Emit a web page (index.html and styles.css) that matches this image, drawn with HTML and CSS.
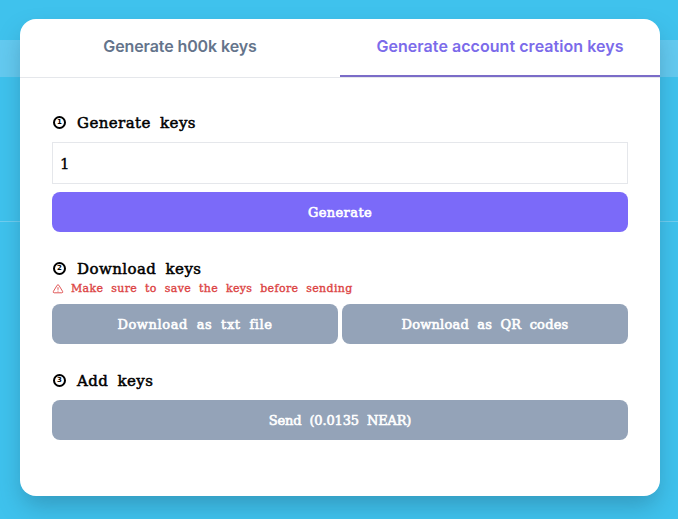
FILE: index.html
```
<!DOCTYPE html>
<html lang="en">
<head>
<meta charset="utf-8">
<title>Generate keys</title>
<link rel="stylesheet" href="styles.css">
</head>
<body>
<main class="card">
  <nav class="tabs">
    <a class="tab tab-hook">Generate h00k keys</a>
    <a class="tab tab-account active">Generate account creation keys</a>
  </nav>
  <div class="content">
    <section class="step">
      <h2 class="title"><span class="number">1</span><span>Generate keys</span></h2>
      <input class="amount" type="text" value="1">
      <button class="btn primary"><span class="b-generate">Generate</span></button>
    </section>
    <section class="step step-download">
      <h2 class="title"><span class="number">2</span><span>Download keys</span></h2>
      <p class="warning">
        <svg class="warning-icon" viewBox="0 0 12 12"><path d="M5.1 2.3Q6 1 6.9 2.3L10.6 8.4Q11.1 9.8 9.8 9.8H2.2Q.9 9.8 1.4 8.4Z"/><path d="M6 4.2V6.8M6 7.7V8.6"/></svg>
        <span>Make sure to save the keys before sending</span>
      </p>
      <div class="buttons">
        <button class="btn"><span class="b-txt">Download as txt file</span></button>
        <button class="btn"><span class="b-qr">Download as QR codes</span></button>
      </div>
    </section>
    <section class="step step-add">
      <h2 class="title"><span class="number">3</span><span>Add keys</span></h2>
      <button class="btn"><span class="b-send">Send (0.0135 NEAR)</span></button>
    </section>
  </div>
</main>
</body>
</html>
```
FILE: styles.css
```
* { box-sizing: border-box; }
body {
  margin: 0;
  height: 519px;
  padding: 19px 18px 23px 20px;
  overflow: hidden;
  background: linear-gradient(#3fc2ed 40px, #64caf0 40px, #64caf0 77px, #3fc2ed 77px, #3fc2ed 221px, #70cef0 221px, #70cef0 222px, #3fc2ed 222px);
  font-family: "DejaVu Serif", serif;
  color: #000;
}
.card {
  height: 477px;
  border-radius: 16px;
  background: #fff;
  box-shadow: 0 12px 24px -3px rgba(30, 80, 105, .36);
}
.tabs { display: flex; height: 59px; border-bottom: 1px solid #e5e7eb; }
.tab {
  flex: 1;
  height: 58px;
  text-align: center;
  white-space: nowrap;
  font: 600 16px/55px Inter, sans-serif;
  color: #64748b;
}
.tab-hook { letter-spacing: -.1px; }
.tab-account { letter-spacing: .05px; }
.active { color: #7b6bea; border-bottom: 2px solid #7b6cc8; }
.content { padding: 32px; }
.title {
  display: flex;
  align-items: center;
  gap: 11px;
  height: 24px;
  margin: 0 0 8px;
  font-size: 15px;
  font-weight: 400;
  line-height: 24px;
  padding-top: 2px;
  white-space: nowrap;
  word-spacing: 4px;
  letter-spacing: .43px;
  -webkit-text-stroke: .5px;
}
.number {
  display: flex;
  align-items: center;
  justify-content: center;
  width: 13px;
  height: 13px;
  margin: -2px 0 0 1px;
  border: 2px solid #000;
  border-radius: 50%;
  font: 700 7px/9px "DejaVu Sans", sans-serif;
  letter-spacing: 0;
  -webkit-text-stroke: 0;
}
.amount {
  display: block;
  width: 100%;
  height: 42px;
  padding: 2px 7px 0;
  border: 1px solid #e5e7eb;
  background: #fff;
  font: 15px "DejaVu Serif", serif;
  -webkit-text-stroke: .3px;
  outline: none;
}
.btn {
  display: block;
  width: 100%;
  height: 40px;
  padding: 0;
  border: 0;
  border-radius: 8px;
  background: #94a3b8;
  color: #fff;
  font: 13px/42px "DejaVu Serif", serif;
  white-space: nowrap;
  word-spacing: 4px;
  -webkit-text-stroke: .6px;
}
.primary { margin-top: 8px; background: #7b6af9; }
.b-generate { letter-spacing: .4px; }
.b-txt { letter-spacing: .6px; }
.b-qr { letter-spacing: .2px; }
.b-send { letter-spacing: -.15px; }
.step-download { margin-top: 24px; }
.step-download .title { margin: 0; }
.warning {
  display: flex;
  align-items: center;
  gap: 7px;
  height: 16px;
  margin: 0 0 8px;
  padding-top: 2px;
  color: #dc4444;
  font-size: 11px;
  line-height: 18px;
  white-space: nowrap;
  word-spacing: 4px;
  letter-spacing: .36px;
  -webkit-text-stroke: .35px;
}
.warning-icon { width: 12px; height: 12px; fill: none; stroke: currentColor; stroke-width: .9; }
.buttons { display: grid; grid-template-columns: 1fr 1fr; gap: 4px; }
.step-add { margin-top: 24px; }
```
